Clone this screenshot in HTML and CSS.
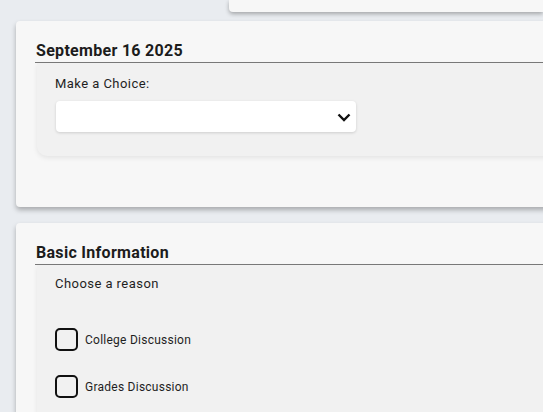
FILE: index.html
```html
<!DOCTYPE html>
<html>
<head>
<meta charset="utf-8">
<link rel="stylesheet" href="styles.css">
</head>
<body>
<div class="topbar"></div>
<section class="card">
  <h2 class="card-title">September 16 2025</h2>
  <div class="panel">
    <label class="field-label">Make a Choice:</label>
    <div class="select">
      <svg class="chev" width="14" height="9" viewBox="0 0 14 9"><path d="M1.5 1.5 L7 7 L12.5 1.5" fill="none" stroke="#111" stroke-width="2.4"/></svg>
    </div>
  </div>
</section>
<section class="card card-2">
  <h2 class="card-title">Basic Information</h2>
  <div class="panel panel-2">
    <div class="field-label">Choose a reason</div>
    <div class="checks">
      <label class="check"><span class="box"></span><span class="check-text">College Discussion</span></label>
      <label class="check"><span class="box"></span><span class="check-text">Grades Discussion</span></label>
    </div>
  </div>
</section>
</body>
</html>
```
FILE: styles.css
```css
html, body {
  margin: 0;
  height: 412px;
  overflow: hidden;
}
body {
  background: #e9ecf0;
  font-family: Roboto, "Liberation Sans", sans-serif;
  color: #1f1f1f;
}
.topbar {
  margin-left: 229px;
  height: 12px;
  background: #f7f7f7;
  border-radius: 0 0 0 4px;
  box-shadow: 0 2px 4px rgba(0,0,0,0.3);
}
.card {
  margin: 9px -20px 0 16px;
  background: #f7f7f7;
  border-radius: 4px 0 0 4px;
  box-shadow: 0 3px 5px rgba(0,0,0,0.28);
  padding: 19px 0 51px 19px;
}
.card-2 {
  margin-top: 16px;
}
.card-title {
  margin: 0;
  font-size: 16px;
  font-weight: 700;
  line-height: 22px;
  color: #1c1c1c;
  padding-left: 1px;
  letter-spacing: 0.3px;
  border-bottom: 1px solid #7a7a7a;
}
.panel {
  margin-left: 2px;
  background: #f1f1f1;
  border-radius: 0 0 0 10px;
  box-shadow: 0 2px 5px rgba(0,0,0,0.08);
  padding: 12px 0 24px 18px;
}
.field-label {
  display: block;
  font-size: 13px;
  line-height: 18px;
  color: #1f1f1f;
  letter-spacing: 0.45px;
}
.select {
  margin-top: 8px;
  margin-left: 1px;
  width: 300px;
  height: 31px;
  background: #fff;
  border-radius: 4px;
  box-shadow: 0 1px 3px rgba(0,0,0,0.15);
  display: flex;
  align-items: center;
  justify-content: flex-end;
  padding-right: 5px;
  box-sizing: border-box;
}
.chev {
  margin-top: 1px;
}
.panel-2 {
  padding-top: 10px;
  padding-bottom: 40px;
}
.checks {
  display: flex;
  flex-direction: column;
  gap: 24px;
  margin-top: 35px;
}
.check {
  display: flex;
  align-items: center;
  gap: 7px;
  font-size: 12px;
}
.box {
  width: 23px;
  height: 23px;
  box-sizing: border-box;
  border: 2px solid #111;
  border-radius: 5px;
  background: #f1f1f1;
}
.check-text {
  color: #1f1f1f;
  letter-spacing: 0.25px;
}
```
